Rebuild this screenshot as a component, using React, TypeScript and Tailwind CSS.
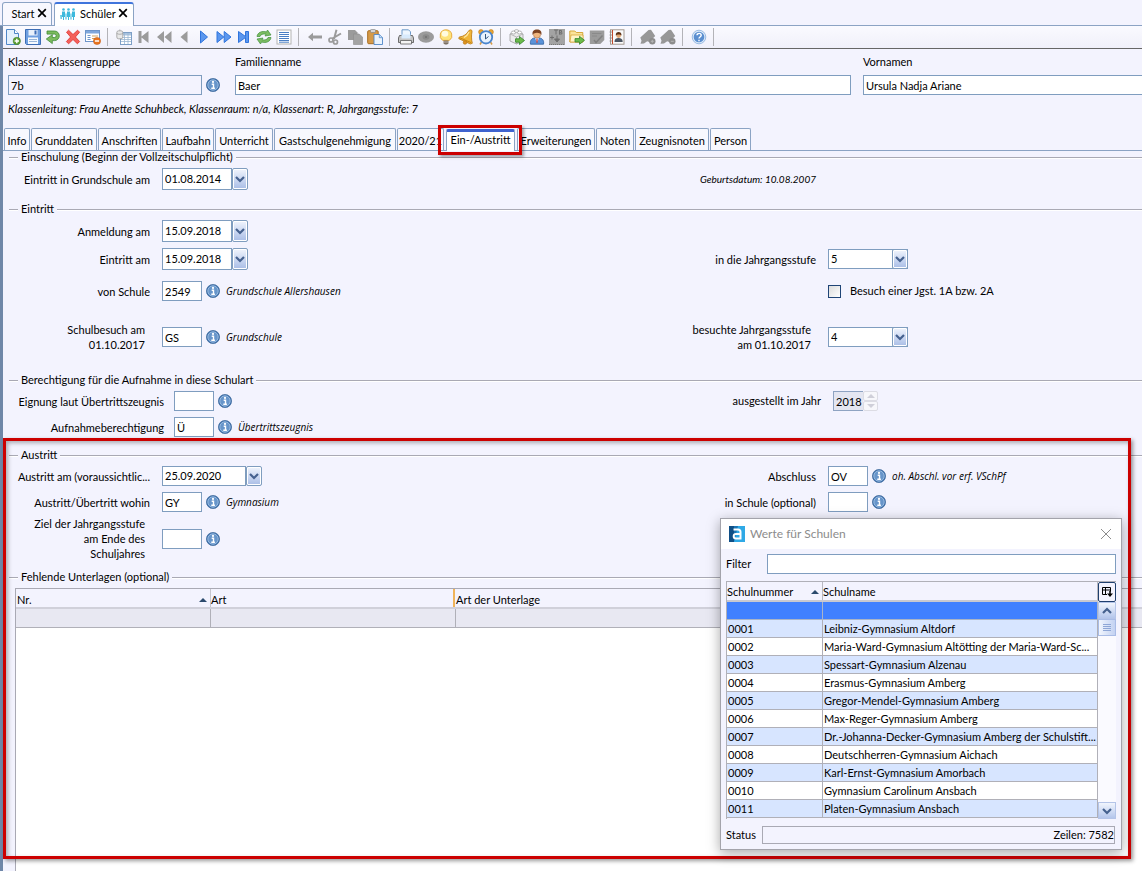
import { ReactNode, useId } from "react";

/* ---------- icons ---------- */

function Svg({ children, className = "size-4" }: { children: ReactNode; className?: string }) {
  return (
    <svg viewBox="0 0 16 16" className={`${className} shrink-0`} aria-hidden="true">
      {children}
    </svg>
  );
}

const GREY = "#9b9b9b";
const BLUE = "#2f74dd";

const ICONS: Record<string, ReactNode> = {
  neu: (
    <>
      <path d="M1.500 .5h8l4 4v11h-12z" fill="#e4f1fd" stroke="#4f87c7" />
      <path d="M9.500 .5v4h4" fill="#fff" stroke="#4f87c7" />
      <circle cx="11.800" cy="12" r="3.700" fill="#5c9e34" stroke="#3f7a22" strokeWidth=".5" />
      <path d="M11.800 9.800v4.400M9.600 12h4.400" stroke="#fff" strokeWidth="1.400" />
    </>
  ),
  speichern: (
    <>
      <path d="M.5 .5h15v15h-14l-1-1z" fill="#6e9fe0" stroke="#3d6db5" />
      <rect x="3.500" y="1" width="9" height="5.500" fill="#e9f1fb" />
      <rect x="9.500" y="1.500" width="2" height="4" fill="#3d6db5" />
      <rect x="3" y="8.500" width="10" height="6.500" fill="#f6fafe" />
      <path d="M4 10.500h8M4 12.500h8" stroke="#9ab6d8" />
    </>
  ),
  zurueck: (
    <path
      d="M2 2h7.500a4.800 4.800 0 0 1 0 9.600H7.300v3L1.300 10l6-4.300v2.800h2.200a1.700 1.700 0 0 0 0-3.400H2z"
      fill="#7cbb5e"
      stroke="#3f8a35"
      strokeWidth=".8"
    />
  ),
  loeschen: (
    <path
      d="M1.500 3.200 3.600 1.200 8 5.500l4.600-4.300 2 2L10.400 8l4.200 4.500-2.200 2.300L8 10.500l-4.400 4.300-2.200-2.200L5.600 8z"
      fill="#f4605a"
      stroke="#dd2f2b"
      strokeWidth=".8"
    />
  ),
  maske: (
    <>
      <rect x=".5" y="1.500" width="14" height="11" fill="#fff" stroke="#6d94c9" />
      <rect x="1" y="2" width="13" height="2.500" fill="#7ea6dc" />
      <path d="M2.500 6.500h3M2.500 8.500h3M2.500 10.500h3" stroke="#6d94c9" />
      <path d="M7 7h6M7 9.500h3" stroke="#d3a35e" />
      <circle cx="12" cy="12" r="3.600" fill="#e8731d" stroke="#c4570c" strokeWidth=".5" />
      <path d="M9.900 12h4.200" stroke="#fff" strokeWidth="1.500" />
    </>
  ),
  tabelle: (
    <>
      <rect x="4.500" y="3.500" width="11" height="12" fill="#fff" stroke="#7d9fc6" />
      <rect x="5" y="4" width="10" height="2.500" fill="#a9c3df" />
      <path d="M5 8.500h10M5 10.500h10M5 12.500h10M8.500 4v11M12 4v11" stroke="#9bb6d2" strokeWidth=".8" />
      <rect x=".8" y="1.800" width="6" height="8" rx="1.800" fill="#e9e9e9" stroke="#9d9d9d" strokeWidth=".8" />
      <path d="M.8 4.500c2 1 4 1 6 0M3.800 1.500v-1" stroke="#9d9d9d" strokeWidth=".8" fill="none" />
    </>
  ),
  erster: <path d="M2.500 2h3v5.500L12.500 2v12L5.500 8.500V14h-3z" fill={GREY} />,
  schnellZurueck: <path d="M8 2v12L1 8zM15.500 2v12L8.500 8z" fill={GREY} />,
  vorheriger: <path d="M11.500 2v12L4.500 8z" fill={GREY} />,
  naechster: <path d="M4.500 2v12l7-6z" fill="#5b97ee" stroke={BLUE} />,
  schnellVor: <path d="M1 2.500v11L7.800 8zM8.200 2.500v11L15 8z" fill="#5b97ee" stroke={BLUE} />,
  letzter: <path d="M2.500 2.500v11L9.500 8.500v5h3v-11h-3v5z" fill="#5b97ee" stroke={BLUE} />,
  aktualisieren: (
    <>
      <path d="M1 7.500C1.500 3.500 6 1.500 10.500 3l1-2 3.500 5-6 1 1-1.800C7 4.500 4.500 5.500 4 7.500z" fill="#7dbd63" stroke="#3f8f3a" strokeWidth=".7" />
      <path d="M15 8.500c-.5 4-5 6-9.500 4.500l-1 2L1 10l6-1-1 1.800c3 .7 5.500-.3 6-2.300z" fill="#7dbd63" stroke="#3f8f3a" strokeWidth=".7" />
    </>
  ),
  liste: (
    <>
      <rect x="1" y="1" width="14" height="14" fill="#fff" stroke="#b4b4b4" />
      <path d="M3 3.500h10M3 5.500h10M3 7.500h10M3 9.500h10M3 11.500h10M3 13.200h10" stroke="#4a7fc4" />
    </>
  ),
  links: <path d="M1 8l5-4.300v2.800h9v3H6v2.800z" fill={GREY} />,
  schere: (
    <g fill="none" stroke={GREY} strokeWidth="1.700">
      <path d="M9.500 .8 7 10M14 4.500 5.500 9.500" strokeWidth="2" />
      <circle cx="4" cy="11" r="2" />
      <circle cx="8.500" cy="13" r="2" />
    </g>
  ),
  kopieren: (
    <>
      <path d="M1 1h7l2.500 2.500V11H1z" fill={GREY} />
      <path d="M6.500 5h5.500l3.500 3v7.500h-9z" fill="#a3a3a3" stroke="#8b8b8b" strokeWidth=".6" />
    </>
  ),
  einfuegen: (
    <>
      <rect x=".7" y="1.700" width="10.500" height="13" rx="1" fill="#d59a48" stroke="#a86d20" />
      <rect x="3.500" y=".5" width="5" height="3" rx=".8" fill="#d5d5d5" stroke="#7c7c7c" strokeWidth=".6" />
      <path d="M7 5.500h5.500l3 3v7H7z" fill="#eaf3fd" stroke="#4f87c7" strokeWidth=".9" />
      <path d="M12.300 5.500v3.200h3.200" fill="#c8dff6" stroke="#4f87c7" strokeWidth=".7" />
    </>
  ),
  drucker: (
    <>
      <path d="M4 7V.8h6.500l2 2V7z" fill="#eef6fe" stroke="#5d8fc4" strokeWidth=".9" />
      <path d="M1.500 6.500h13l1 2.500v4.500H.5V9z" fill="#c6c6c6" stroke="#5f5f5f" strokeWidth=".9" />
      <path d="M3.500 5.500h9v4h-9z" fill="#d8eafc" />
      <path d="M2.500 11.500h11v3.500h-11z" fill="#f4f4f4" stroke="#5f5f5f" strokeWidth=".8" />
    </>
  ),
  auge: (
    <>
      <ellipse cx="8" cy="8" rx="8" ry="5.800" fill="#9b9b9b" />
      <ellipse cx="8" cy="8" rx="3.500" ry="2.800" fill="#8a8a8a" />
      <circle cx="8" cy="8" r="1" fill="#6f6f6f" />
    </>
  ),
  lampe: (
    <>
      <path d="M8 .8a6 5.800 0 0 1 3.300 10.600H4.700A6 5.800 0 0 1 8 .8z" fill="#fde37b" stroke="#e5a63a" strokeWidth=".9" />
      <ellipse cx="7" cy="4.800" rx="3.300" ry="3" fill="#fffbe0" />
      <path d="M5.500 11.500h5v3l-1.500 1h-2l-1.500-1z" fill="#7a6f63" />
      <path d="M5.500 13h5" stroke="#d8cfc4" strokeWidth=".7" />
    </>
  ),
  glocke: (
    <>
      <path d="M12.500 .8c1.200 0 1.700.9 1.500 1.900-.6 3-.8 7.500.3 11.600l-2 .7L.8 9.700l.4-1.700C6 7.500 9 4.800 10.700 1.900c.4-.7 1-1.100 1.800-1.100z" fill="#f0b53a" stroke="#b9760f" strokeWidth=".8" />
      <path d="M2 8.900l11 4.700" stroke="#c98716" strokeWidth="1" />
      <path d="M11 3c-1 2.500-3 4.500-5 5.500" fill="none" stroke="#ffe9a6" strokeWidth="1.300" />
      <circle cx="7" cy="13.500" r="1.800" fill="#dd9420" stroke="#b9760f" strokeWidth=".6" />
    </>
  ),
  wecker: (
    <>
      <circle cx="3" cy="3" r="2.400" fill="#e9a637" stroke="#bf7a14" strokeWidth=".6" />
      <circle cx="13" cy="3" r="2.400" fill="#e9a637" stroke="#bf7a14" strokeWidth=".6" />
      <path d="M3.500 13 2 15.500M12.500 13l1.500 2.500" stroke="#d59a48" strokeWidth="1.500" />
      <circle cx="8" cy="8.300" r="6.200" fill="#e8f2fd" stroke="#4b86cd" strokeWidth="1.800" />
      <path d="M7.500 5v5l3-2.500" fill="none" stroke="#33567f" />
    </>
  ),
  export: (
    <>
      <path d="M1 5l6.500-3L14 5v7l-6.500 3L1 12z" fill="#ececec" stroke="#9a9a9a" strokeWidth=".8" />
      <path d="M1 5l6.500 3L14 5M7.500 8v7" fill="none" stroke="#a8a8a8" strokeWidth=".8" />
      <ellipse cx="4.500" cy="3.500" rx="2.200" ry="1.500" fill="#fff" stroke="#9a9a9a" strokeWidth=".7" />
      <ellipse cx="10.500" cy="3.500" rx="2.200" ry="1.500" fill="#fff" stroke="#9a9a9a" strokeWidth=".7" />
      <ellipse cx="7.500" cy="2" rx="2.200" ry="1.300" fill="#fff" stroke="#9a9a9a" strokeWidth=".7" />
      <path d="M6.500 9.800h4V7.500l5 4-5 4v-2.300h-4z" fill="#6cbb4a" stroke="#33832b" strokeWidth=".8" />
    </>
  ),
  person: (
    <>
      <path d="M1.500 15.200c-.8-4 1.500-6 4-6.200h5c2.500.2 4.800 2.200 4 6.200z" fill="#5a92d8" stroke="#2f5f9f" strokeWidth=".8" />
      <path d="M6 9.200h4L8 13z" fill="#fff" />
      <path d="M8 9.800v4" stroke="#d23b2e" strokeWidth="1.300" />
      <circle cx="8" cy="5.500" r="3.600" fill="#efb67e" stroke="#a9653a" strokeWidth=".5" />
      <path d="M3.600 6C3 2 5 .6 8 .6S13 2 12.400 6C11.500 4 10 4 8 3.800 6 4 4.500 4 3.600 6z" fill="#7c4322" />
    </>
  ),
  tb: (
    <>
      <rect width="16" height="16" fill="#a3a3a3" />
      <path d="M5 1h4M7 1v4.500M10.500 1v4.500M10.500 1.500h2v1.800h-2M10.500 5h2.300V3.500" fill="none" stroke="#6f6f6f" />
      <path d="M1 8.500h4M3 6.500v4" stroke="#6f6f6f" />
      <path d="M8 6.500v4M5.500 10h5L8 13z" fill="#6f6f6f" stroke="#6f6f6f" />
      <path d="M0 15.500h16" stroke="#777" strokeDasharray="1 1" />
    </>
  ),
  ordner: (
    <>
      <path d="M.8 2h5l1.500 1.500h6.500V13H.8z" fill="#fbe39b" stroke="#d3a02b" strokeWidth=".9" />
      <path d="M2 6h12v7H1z" fill="#fff3c6" stroke="#d3a02b" strokeWidth=".7" />
      <path d="M6 9.600h4.500V7.300l5 4-5 4V13H6z" fill="#6cbb4a" stroke="#33832b" strokeWidth=".8" />
    </>
  ),
  notiz: (
    <>
      <path d="M.8 1.500h14.500v9.500l-4 4H.8z" fill="#9b9b9b" />
      <path d="M3 4.500h9.500M3 7h5" stroke="#8a8a8a" />
      <path d="M5 11l2 2.500 6.500-7" fill="none" stroke="#808080" strokeWidth="1.500" />
    </>
  ),
  adressbuch: (
    <>
      <rect x="1.500" y=".8" width="13.500" height="14.400" fill="#fafafa" stroke="#9a8f86" strokeWidth=".9" />
      <path d="M3.500 1v14" stroke="#c14a2c" strokeWidth="1" />
      <path d="M.5 3h2.500M.5 6h2.500M.5 9h2.500M.5 12h2.500" stroke="#888" strokeWidth=".8" />
      <path d="M5.500 13c0-3 1.300-4 4-4s4.200 1 4.200 4z" fill="#4d5663" />
      <circle cx="9.600" cy="6.500" r="2.400" fill="#e0a774" />
      <path d="M6.800 6.500C6.500 4 8 3 9.600 3s3.200 1 2.900 3.500c-1-1.500-4.700-1.500-5.700 0z" fill="#5d3015" />
    </>
  ),
  stiftPlus: (
    <>
      <path d="M8.500 1l2.500-.2L15.200 7l-3 3-.5 4-4.500-1.800-3.200 2.300-3.500.3 1-3L.3 8.500z" fill="#979797" />
      <circle cx="12.300" cy="12.300" r="3.200" fill="#8c8c8c" />
      <path d="M12.300 10.800v3M10.800 12.300h3" stroke="#b6b6b6" />
    </>
  ),
  stiftMinus: (
    <>
      <path d="M8.500 1l2.500-.2L15.200 7l-3 3-.5 4-4.500-1.800-3.200 2.300-3.500.3 1-3L.3 8.500z" fill="#979797" />
      <circle cx="12.300" cy="12.300" r="3.200" fill="#8c8c8c" />
      <path d="M10.800 12.300h3" stroke="#b6b6b6" />
    </>
  ),
  hilfe: (
    <>
      <circle cx="8" cy="8" r="6.800" fill="#dbe9f8" stroke="#88aedc" strokeWidth=".8" />
      <circle cx="8" cy="8" r="5.300" fill="#5b8fd0" />
      <path d="M6 6.300c0-2.600 4.200-2.500 4.200 0C10.200 8 8 8 8 9.500M8 10.700v1.500" fill="none" stroke="#fff" strokeWidth="1.400" />
    </>
  ),
};

function InfoIcon() {
  return (
    <button type="button" aria-label="Auswahl anzeigen" className="ml-1 size-[14px] shrink-0">
      <svg viewBox="0 0 14 14" className="size-[14px]" aria-hidden="true">
        <circle cx="7" cy="7" r="6.600" fill="#3f72ad" stroke="#3d699c" strokeWidth=".7" />
        <circle cx="7" cy="7" r="5.200" fill="#6795ca" stroke="#a9c8e8" strokeWidth=".8" />
        <path d="M5.700 6.200h1.800v4M5.300 10.200h3.600" fill="none" stroke="#fff" strokeWidth="1.400" />
        <circle cx="7" cy="3.900" r="1.100" fill="#fff" />
      </svg>
    </button>
  );
}

function Chevron({ up = false }: { up?: boolean }) {
  return (
    <svg viewBox="0 0 10 8" className="h-2 w-2.5" aria-hidden="true">
      <path d={up ? "M1 6l4-4 4 4" : "M1 2l4 4 4-4"} fill="none" stroke="#45618f" strokeWidth="2.200" />
    </svg>
  );
}

function SortMark({ className }: { className: string }) {
  return (
    <svg viewBox="0 0 8 4" className={`h-1 w-2 ${className}`} aria-hidden="true">
      <path d="M0 4l4-4 4 4z" fill="#2b4a6d" />
    </svg>
  );
}

/* ---------- form parts ---------- */

const FIELD = "border border-[#7f9dbf] bg-white pl-[2px] text-black outline-none";
const ARROW =
  "flex w-4 shrink-0 items-center justify-center rounded-[2px] border border-[#7f9dbf] bg-linear-to-b from-[#f1f5fd] to-[#a9bde6] shadow-[inset_0_0_0_1px_#fff]";

function Row({ children, className = "h-5" }: { children: ReactNode; className?: string }) {
  return <div className={`grid grid-cols-[minmax(0,1fr)_475px] items-center ${className}`}>{children}</div>;
}

function Field({
  label,
  lines,
  wide = false,
  hint,
  children,
}: {
  label?: string;
  lines?: string[];
  wide?: boolean;
  hint?: string;
  children: (id: string) => ReactNode;
}) {
  const id = useId();
  return (
    <div className="flex h-full items-center">
      <label
        htmlFor={id}
        className={`shrink-0 text-right leading-[15px] whitespace-nowrap ${wide ? "mr-[10px] w-[161px]" : "mr-3 w-[147px]"} ${lines ? "pr-[5px]" : ""}`}
      >
        {lines
          ? lines.map((l) => (
              <span key={l} className="block">
                {l}
              </span>
            ))
          : label}
      </label>
      {children(id)}
      {hint && <em className="ml-[6px] font-['Open_Sans',sans-serif] text-[10px]">{hint}</em>}
    </div>
  );
}

function DateField({ id, value, className = "w-[70px]" }: { id: string; value: string; className?: string }) {
  return (
    <div className="flex h-full">
      <input id={id} defaultValue={value} className={`${FIELD} ${className}`} />
      <button type="button" aria-label="Kalender öffnen" className={ARROW}>
        <Chevron />
      </button>
    </div>
  );
}

function CodeField({ id, value }: { id: string; value: string }) {
  return (
    <>
      <input id={id} defaultValue={value} className={`${FIELD} h-5 w-10`} />
      <InfoIcon />
    </>
  );
}

function Dropdown({ id, value, options }: { id: string; value: string; options: string[] }) {
  return (
    <div className="relative h-5 w-20">
      <select id={id} defaultValue={value} className={`${FIELD} h-5 w-20 appearance-none`}>
        {options.map((o) => (
          <option key={o}>{o}</option>
        ))}
      </select>
      <span className={`${ARROW} pointer-events-none absolute top-0 right-0 h-5`}>
        <Chevron />
      </span>
    </div>
  );
}

function Legend({ children }: { children: ReactNode }) {
  return (
    <h2 className="mb-1 flex h-[14px] items-center pl-[6px] leading-[14px]">
      <span className="mr-[3px] h-px w-[9px] bg-[#a9a9b4] shadow-[0_1px_0_#fff]" />
      {children}
      <span className="ml-[3px] h-px flex-1 bg-[#a9a9b4] shadow-[0_1px_0_#fff]" />
    </h2>
  );
}

/* ---------- page data ---------- */

const TOOLBAR: { icon: string; title: string }[][] = [
  [
    { icon: "neu", title: "Neu" },
    { icon: "speichern", title: "Speichern" },
    { icon: "zurueck", title: "Rückgängig" },
    { icon: "loeschen", title: "Löschen" },
    { icon: "maske", title: "Maske leeren" },
  ],
  [
    { icon: "tabelle", title: "Tabelle" },
    { icon: "erster", title: "Erster" },
    { icon: "schnellZurueck", title: "Zurückspringen" },
    { icon: "vorheriger", title: "Vorheriger" },
    { icon: "naechster", title: "Nächster" },
    { icon: "schnellVor", title: "Vorspringen" },
    { icon: "letzter", title: "Letzter" },
    { icon: "aktualisieren", title: "Aktualisieren" },
    { icon: "liste", title: "Liste" },
  ],
  [
    { icon: "links", title: "Zurück" },
    { icon: "schere", title: "Ausschneiden" },
    { icon: "kopieren", title: "Kopieren" },
    { icon: "einfuegen", title: "Einfügen" },
  ],
  [
    { icon: "drucker", title: "Drucken" },
    { icon: "auge", title: "Ansicht" },
    { icon: "lampe", title: "Hinweis" },
    { icon: "glocke", title: "Erinnerung" },
    { icon: "wecker", title: "Wiedervorlage" },
  ],
  [
    { icon: "export", title: "Export" },
    { icon: "person", title: "Person" },
    { icon: "tb", title: "Textbausteine" },
    { icon: "ordner", title: "Ordner" },
    { icon: "notiz", title: "Notiz" },
    { icon: "adressbuch", title: "Adressbuch" },
  ],
  [
    { icon: "stiftPlus", title: "Markierung hinzufügen" },
    { icon: "stiftMinus", title: "Markierung entfernen" },
  ],
  [{ icon: "hilfe", title: "Hilfe" }],
];

const TABS: { name: string; width: string }[] = [
  { name: "Info", width: "w-[26px]" },
  { name: "Grunddaten", width: "w-[66px]" },
  { name: "Anschriften", width: "w-[63px]" },
  { name: "Laufbahn", width: "w-[52px]" },
  { name: "Unterricht", width: "w-[58px]" },
  { name: "Gastschulgenehmigung", width: "w-[122px]" },
  { name: "2020/21", width: "w-[47px]" },
  { name: "Ein-/Austritt", width: "w-[69px]" },
  { name: "Erweiterungen", width: "w-[78px]" },
  { name: "Noten", width: "w-[38px]" },
  { name: "Zeugnisnoten", width: "w-[74px]" },
  { name: "Person", width: "w-[41px]" },
];

const SCHULEN: [string, string][] = [
  ["0001", "Leibniz-Gymnasium Altdorf"],
  ["0002", "Maria-Ward-Gymnasium Altötting der Maria-Ward-Sc..."],
  ["0003", "Spessart-Gymnasium Alzenau"],
  ["0004", "Erasmus-Gymnasium Amberg"],
  ["0005", "Gregor-Mendel-Gymnasium Amberg"],
  ["0006", "Max-Reger-Gymnasium Amberg"],
  ["0007", "Dr.-Johanna-Decker-Gymnasium Amberg der Schulstift..."],
  ["0008", "Deutschherren-Gymnasium Aichach"],
  ["0009", "Karl-Ernst-Gymnasium Amorbach"],
  ["0010", "Gymnasium Carolinum Ansbach"],
  ["0011", "Platen-Gymnasium Ansbach"],
];

/* ---------- page sections ---------- */

function WindowTabs() {
  return (
    <nav className="flex h-[26px] items-end gap-[2px] border-b border-[#8ba3c4] pl-[2px]">
      <div className="flex h-[23px] w-[50px] items-center justify-center gap-[2px] rounded-t-[3px] border border-b-0 border-[#8ba3c4] bg-[#f8f8fe] pl-1">
        <a href="#start">Start</a>
        <CloseMark />
      </div>
      <div className="-mb-px flex h-6 w-20 items-center gap-[2px] rounded-t-[3px] border border-t-2 border-b-0 border-[#8ba3c4] border-t-[#3f74dc] bg-white pb-[3px] pl-[5px]">
        <svg viewBox="0 0 16 12" className="h-3 w-4" fill="#3cb9dc" aria-hidden="true">
          <circle cx="3.500" cy="1.500" r="1.300" />
          <circle cx="8.500" cy="1.500" r="1.300" />
          <circle cx="13.500" cy="1.500" r="1.300" />
          <path d="M2 3.500h3v5.500h-1v3h-1v-3h-1zM7 3.500h3v5.500h-1v3h-1v-3h-1zM12 3.500h3v5.500h-1v3h-1v-3h-1z" />
          <path d="M0 7h2v4h-1.500zM5.300 5.500h1.400v6h-1.400zM10.300 5.500h1.400v6h-1.400z" opacity=".75" />
        </svg>
        <a href="#schueler" className="ml-[2px]">Schüler</a>
        <CloseMark />
      </div>
    </nav>
  );
}

function CloseMark() {
  return (
    <button type="button" aria-label="Schließen" className="-mt-[2px]">
      <svg viewBox="0 0 10 10" className="size-[10px]" aria-hidden="true">
        <path d="M1.200 1.200l7.600 7.600M8.800 1.200L1.200 8.800" stroke="#000" strokeWidth="1.700" />
      </svg>
    </button>
  );
}

function Toolbar() {
  return (
    <div className="flex h-[23px] items-center border-b border-[#666] bg-linear-to-b from-[#fafaff] to-[#f0f0fa]">
      {TOOLBAR.map((group, i) => (
        <div key={i} className="flex items-center">
          {group.map((b) => (
            <button key={b.icon} type="button" aria-label={b.title} className="flex size-5 items-center justify-center">
              <Svg>{ICONS[b.icon]}</Svg>
            </button>
          ))}
          <span className="mr-[6px] ml-1 h-[18px] w-px bg-[#b3b3b8]" />
        </div>
      ))}
    </div>
  );
}

function PupilHeader() {
  return (
    <header className="pt-[5px] pl-[5px]">
      <div className="flex">
        <div>
          <label htmlFor="klasse" className="block h-[21px] leading-[15px]">
            Klasse / Klassengruppe
          </label>
          <div className="flex items-center">
            <input id="klasse" readOnly defaultValue="7b" className="h-5 w-[194px] border border-[#7f9dbf] bg-[#f3f3fe] pl-[2px] outline-none" />
            <InfoIcon />
          </div>
        </div>
        <div className="ml-[15px] flex-1">
          <label htmlFor="familienname" className="block h-[21px] leading-[15px]">
            Familienname
          </label>
          <input id="familienname" defaultValue="Baer" className={`${FIELD} h-5 w-full`} />
        </div>
        <div className="ml-3 w-[279px]">
          <label htmlFor="vornamen" className="block h-[21px] leading-[15px]">
            Vornamen
          </label>
          <input id="vornamen" defaultValue="Ursula Nadja Ariane" className={`${FIELD} h-5 w-full border-r-0`} />
        </div>
      </div>
      <p className="mt-[6px] leading-4 italic">
        Klassenleitung: Frau Anette Schuhbeck, Klassenraum: n/a, Klassenart: R, Jahrgangsstufe: 7
      </p>
    </header>
  );
}

function SectionTabs() {
  return (
    <div className="relative mt-[11px] flex h-[23px] items-end gap-px border-b border-[#8ba3c4] pl-px" role="tablist">
      {TABS.map((t) => {
        const active = t.name === "Ein-/Austritt";
        return (
          <button
            key={t.name}
            type="button"
            role="tab"
            aria-selected={active}
            className={`flex justify-center overflow-hidden rounded-t-[2px] border border-b-0 border-[#8ba3c4] whitespace-nowrap ${t.width} ${
              active ? "mx-[1px] -mb-px h-[22px] border-t-[3px] border-t-[#3f63cf] bg-white leading-[15px]" : "h-[22px] bg-[#f8f8fe] pt-[4px] leading-[16px]"
            }`}
          >
            {t.name}
          </button>
        );
      })}
      <span className="pointer-events-none absolute -top-[3px] left-[435px] h-[30px] w-[84px] border-[3px] border-[#cc0000] shadow-[2px_2px_3px_rgba(0,0,0,0.35)]" />
    </div>
  );
}

function MissingDocuments() {
  return (
    <div className="ml-3 flex-1 border-t border-l border-[#a9a9b4] bg-white">
      <table className="w-full table-fixed border-separate border-spacing-0 text-left">
        <colgroup>
          <col className="w-[195px]" />
          <col className="w-[245px]" />
          <col />
        </colgroup>
        <thead>
          <tr className="h-5 bg-[#f3f3fe]">
            <th className="border-b-2 border-[#d0d0da] p-0 font-normal">
              <div className="flex h-[18px] items-center justify-between border-r border-[#c6c6ce] pt-1 pl-px">
                Nr.
                <SortMark className="mr-[3px]" />
              </div>
            </th>
            <th className="border-b-2 border-[#d0d0da] p-0 font-normal">
              <div className="mr-px flex h-[18px] items-center border-r-2 border-[#f0b45a] pt-1">Art</div>
            </th>
            <th className="border-b-2 border-[#d0d0da] p-0 font-normal">
              <div className="flex h-[18px] items-center pt-1">Art der Unterlage</div>
            </th>
          </tr>
        </thead>
        <tbody>
          <tr className="h-[19px] bg-[#e8e8f2]">
            <td className="border-r border-b border-[#b0b0b8] p-0" />
            <td className="border-r border-b border-[#b0b0b8] p-0" />
            <td className="border-b border-[#b0b0b8] p-0" />
          </tr>
        </tbody>
      </table>
    </div>
  );
}

function SchoolDialog() {
  return (
    <section
      role="dialog"
      aria-label="Werte für Schulen"
      className="absolute top-[70px] right-5 w-[402px] border border-[#a3a3ab] bg-[#f3f3fe] shadow-[0_3px_12px_rgba(0,0,0,0.35)]"
    >
      <div className="flex h-[30px] items-center bg-white pl-2">
        <svg viewBox="0 0 16 16" className="size-4" aria-hidden="true">
          <rect width="16" height="16" fill="#2fa9e6" />
          <path d="M0 0h5v16H0z" fill="#0f4f86" />
          <path d="M5 0h4L5 16z" fill="#1b74b3" />
          <path d="M4.500 3.500h4.500q2.500 0 2.500 2.500v6.500H7q-2.300 0-2.300-2.300T7 8h4" fill="none" stroke="#fff" strokeWidth="2" />
        </svg>
        <h2 className="ml-[5px] flex-1 text-[12px] text-[#8c8c8c]">Werte für Schulen</h2>
        <button type="button" aria-label="Schließen" className="mr-[10px]">
          <svg viewBox="0 0 10 10" className="size-[10px]" aria-hidden="true">
            <path d="M0 0l10 10M10 0L0 10" stroke="#8c8c8c" strokeWidth="1" />
          </svg>
        </button>
      </div>

      <div className="flex h-[29px] items-center px-[5px]">
        <label htmlFor="filter" className="w-[41px]">
          Filter
        </label>
        <input id="filter" className={`${FIELD} h-5 flex-1`} />
      </div>

      <div className="mt-[3px] mr-[5px] ml-[5px] flex h-[238px] overflow-hidden border-t border-l border-[#b0b0b8]">
        <div className="min-w-0 flex-1">
          <table className="w-full table-fixed border-separate border-spacing-0 text-left">
            <colgroup>
              <col className="w-[96px]" />
              <col />
            </colgroup>
            <thead>
              <tr className="h-5">
                <th className="border-b-2 border-[#c8c8d0] p-0 font-normal">
                  <div className="flex h-[18px] items-center justify-between border-r border-[#b8b8c0] pt-[2px]">
                    Schulnummer
                    <SortMark className="mr-[3px]" />
                  </div>
                </th>
                <th className="border-b-2 border-[#c8c8d0] p-0 font-normal">
                  <div className="flex h-[18px] items-center border-r border-[#b8b8c0] pt-[2px]">Schulname</div>
                </th>
              </tr>
            </thead>
            <tbody>
              <tr className="h-[18px] bg-[#4080ff]">
                <td className="border-r border-b border-[#a9b4c8] p-0" />
                <td className="border-r border-b border-[#a9b4c8] p-0" />
              </tr>
              {SCHULEN.map(([nr, name], i) => (
                <tr key={nr} className={`h-[18px] leading-[17px] ${i % 2 === 0 ? "bg-[#d7e5ff]" : "bg-white"}`}>
                  <td className="border-r border-b border-[#b0b0b8] p-0 pl-px">{nr}</td>
                  <td className="border-r border-b border-[#b0b0b8] p-0 pl-px whitespace-nowrap">{name}</td>
                </tr>
              ))}
            </tbody>
          </table>
        </div>
        <div className="flex w-[18px] flex-col bg-[#fafaff]">
          <button
            type="button"
            aria-label="Spalten auswählen"
            className="flex h-5 shrink-0 items-center justify-center rounded-[2px] border border-[#1f3f6e] bg-[#f3f3fe]"
          >
            <svg viewBox="0 0 12 12" className="size-3" aria-hidden="true">
              <path d="M6 8.500H1.500v-7h8v4M1.500 4h8M4.500 1.500v7" fill="none" stroke="#000" />
              <path d="M6 7.500h6L9 11z" />
              <path d="M9 5v3" stroke="#000" strokeWidth="1.500" />
            </svg>
          </button>
          <button type="button" aria-label="Nach oben" className="flex h-[17px] shrink-0 items-center justify-center border border-[#b4c4e8] bg-linear-to-b from-[#f1f5fd] to-[#b4c6ec]">
            <Chevron up />
          </button>
          <span className="flex h-[17px] shrink-0 flex-col items-center justify-center gap-px border border-[#a9bce6] bg-linear-to-r from-[#f1f5fd] to-[#c3d2f2]">
            <i className="h-px w-2 bg-[#8ea6d6]" />
            <i className="h-px w-2 bg-[#8ea6d6]" />
            <i className="h-px w-2 bg-[#8ea6d6]" />
            <i className="h-px w-2 bg-[#8ea6d6]" />
          </span>
          <span className="flex-1" />
          <button type="button" aria-label="Nach unten" className="flex h-[17px] shrink-0 items-center justify-center border border-[#b4c4e8] bg-linear-to-b from-[#f1f5fd] to-[#b4c6ec]">
            <Chevron />
          </button>
        </div>
      </div>

      <div className="flex items-center pt-[7px] pr-[6px] pb-[5px] pl-[5px]">
        <span className="w-9">Status</span>
        <output className="h-[18px] flex-1 border border-[#a9a9b4] text-right leading-4">Zeilen: 7582</output>
      </div>
    </section>
  );
}

export default function App() {
  return (
    <div className="flex min-h-screen flex-col overflow-hidden bg-[#f3f3fe] font-['Lato','Open_Sans',sans-serif] text-[11px] leading-4 text-black">
      <WindowTabs />
      <main className="flex flex-1 flex-col border-l-[3px] border-[#6f87a8]">
        <Toolbar />
        <PupilHeader />
        <SectionTabs />

        <section className="-mt-px pb-3">
          <Legend>Einschulung (Beginn der Vollzeitschulpflicht)</Legend>
          <Row className="h-[22px]">
            <Field label="Eintritt in Grundschule am">{(id) => <DateField id={id} value="01.08.2014" />}</Field>
            <em className="w-[149px] text-right text-[10px]">Geburtsdatum: 10.08.2007</em>
          </Row>
        </section>

        <section className="pb-[21px]">
          <Legend>Eintritt</Legend>
          <Row className="h-[22px]">
            <Field label="Anmeldung am">{(id) => <DateField id={id} value="15.09.2018" />}</Field>
          </Row>
          <Row className="mt-[6px] h-[22px]">
            <Field label="Eintritt am">{(id) => <DateField id={id} value="15.09.2018" />}</Field>
            <div className="pl-[2px]">
              <Field label="in die Jahrgangsstufe">
                {(id) => <Dropdown id={id} value="5" options={["5", "6", "7", "8", "9"]} />}
              </Field>
            </div>
          </Row>
          <Row className="mt-[11px] h-5">
            <Field label="von Schule" hint="Grundschule Allershausen">
              {(id) => <CodeField id={id} value="2549" />}
            </Field>
            <label className="flex items-center gap-[9px] pl-[161px]">
              <input type="checkbox" className="size-[13px] appearance-none border border-[#1f4476] bg-linear-to-br from-[#dcdcdc] to-white" />
              Besuch einer Jgst. 1A bzw. 2A
            </label>
          </Row>
          <Row className="mt-[21px] h-[30px]">
            <Field lines={["Schulbesuch am", "01.10.2017"]} hint="Grundschule">
              {(id) => <CodeField id={id} value="GS" />}
            </Field>
            <div className="pl-[2px]">
              <Field lines={["besuchte Jahrgangsstufe", "am 01.10.2017"]}>
                {(id) => <Dropdown id={id} value="4" options={["1", "2", "3", "4"]} />}
              </Field>
            </div>
          </Row>
        </section>

        <section className="pb-[11px]">
          <Legend>Berechtigung für die Aufnahme in diese Schulart</Legend>
          <Row>
            <Field wide label="Eignung laut Übertrittszeugnis">
              {(id) => <CodeField id={id} value="" />}
            </Field>
            <div className="flex h-5 items-center">
              <label htmlFor="ausgestellt" className="mr-3 w-[154px] text-right">
                ausgestellt im Jahr
              </label>
              <input id="ausgestellt" disabled defaultValue="2018" className="h-5 w-[30px] border border-r-0 border-[#8ea3c2] bg-[#e4e6f1] pl-[2px]" />
              <span className="flex h-5 w-[15px] flex-col">
                {[true, false].map((up) => (
                  <button
                    key={String(up)}
                    type="button"
                    disabled
                    aria-label={up ? "Jahr erhöhen" : "Jahr verringern"}
                    className="flex flex-1 items-center justify-center rounded-[2px] border border-[#dcdce4] bg-[#f7f7fb]"
                  >
                    <svg viewBox="0 0 8 4" className="h-1 w-2" aria-hidden="true">
                      <path d={up ? "M0 4l4-4 4 4z" : "M0 0l4 4 4-4z"} fill="#cfcfd9" />
                    </svg>
                  </button>
                ))}
              </span>
            </div>
          </Row>
          <Row className="mt-[6px] h-5">
            <Field wide label="Aufnahmeberechtigung" hint="Übertrittszeugnis">
              {(id) => <CodeField id={id} value="Ü" />}
            </Field>
          </Row>
        </section>

        <div className="relative flex flex-1 flex-col">
          <section className="pb-[9px]">
            <Legend>Austritt</Legend>
            <Row>
              <Field label="Austritt am (voraussichtlic...">
                {(id) => <DateField id={id} value="25.09.2020" className="w-[84px]" />}
              </Field>
              <div className="pl-[2px]">
                <Field label="Abschluss" hint="oh. Abschl. vor erf. VSchPf">
                  {(id) => <CodeField id={id} value="OV" />}
                </Field>
              </div>
            </Row>
            <Row className="mt-[6px] h-5">
              <Field label="Austritt/Übertritt wohin" hint="Gymnasium">
                {(id) => <CodeField id={id} value="GY" />}
              </Field>
              <div className="pl-[2px]">
                <Field label="in Schule (optional)">{(id) => <CodeField id={id} value="" />}</Field>
              </div>
            </Row>
            <Row className="mt-1 h-[45px]">
              <Field lines={["Ziel der Jahrgangsstufe", "am Ende des", "Schuljahres"]}>
                {(id) => <CodeField id={id} value="" />}
              </Field>
            </Row>
          </section>
          <Legend>Fehlende Unterlagen (optional)</Legend>
          <MissingDocuments />
          <span className="pointer-events-none absolute -top-[10px] right-[11px] bottom-3 left-0 border-[3px] border-[#cc0000] shadow-[2px_2px_4px_rgba(0,0,0,0.4),inset_2px_2px_4px_rgba(0,0,0,0.3)]" />
          <SchoolDialog />
        </div>
      </main>
    </div>
  );
}
